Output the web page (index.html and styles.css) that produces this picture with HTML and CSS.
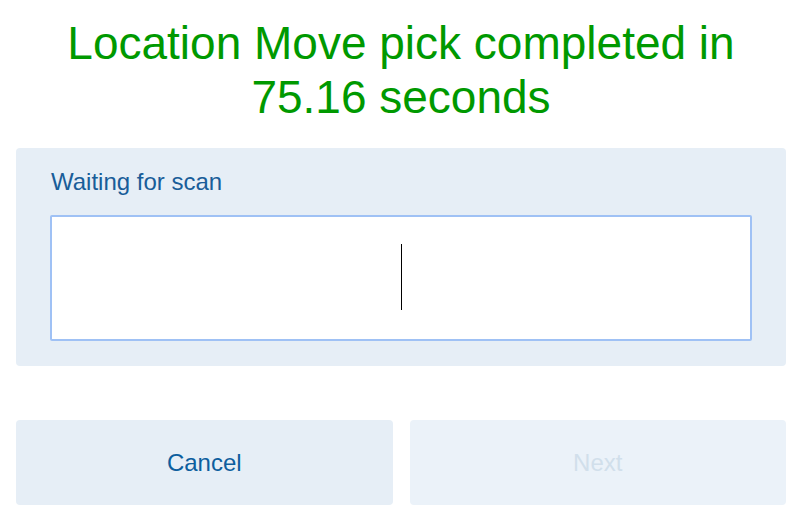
FILE: index.html
```html
<!DOCTYPE html>
<html>
<head>
<meta charset="utf-8">
<link rel="stylesheet" href="styles.css">
</head>
<body>
<div class="page">
  <h1 class="title">Location Move pick completed in 75.16 seconds</h1>
  <section class="scan-panel">
    <div class="scan-label">Waiting for scan</div>
    <div class="scan-input"><span class="caret"></span></div>
  </section>
  <div class="actions">
    <button class="btn btn-cancel">Cancel</button>
    <button class="btn btn-next" disabled>Next</button>
  </div>
</div>
</body>
</html>
```

FILE: styles.css
```css
html, body {
  margin: 0;
  padding: 0;
  background: #ffffff;
  font-family: "Liberation Sans", Arial, sans-serif;
}

.page {
  width: 770px;
  margin-left: 16px;
  padding-top: 16px;
}

.title {
  margin: 0;
  font-size: 46px;
  font-weight: normal;
  line-height: normal;
  color: #009900;
  text-align: center;
  padding: 0 24px;
}

.scan-panel {
  margin-top: 24px;
  background: #e6eef6;
  border-radius: 4px;
  padding: 20px 34px 25px;
}

.scan-label {
  font-size: 24px;
  line-height: 28px;
  color: #195d99;
  padding-left: 1px;
  margin-bottom: 19px;
}

.scan-input {
  height: 122px;
  background: #ffffff;
  border: 2px solid #9fc1f5;
  border-radius: 2px;
  display: flex;
  align-items: center;
  justify-content: center;
}

.caret {
  display: block;
  width: 1px;
  height: 66px;
  background: #000000;
  margin-left: 1px;
  margin-top: -2px;
}

.actions {
  margin-top: 54px;
  display: flex;
  gap: 17px;
}

.btn {
  flex: 1;
  height: 85px;
  border: none;
  border-radius: 4px;
  font-family: "Liberation Sans", Arial, sans-serif;
  font-size: 24px;
  padding: 0;
}

.btn-cancel {
  background: #e6eef6;
  color: #0d5e9e;
}

.btn-next {
  background: #ebf2f9;
  color: #d1dfeb;
}
```
